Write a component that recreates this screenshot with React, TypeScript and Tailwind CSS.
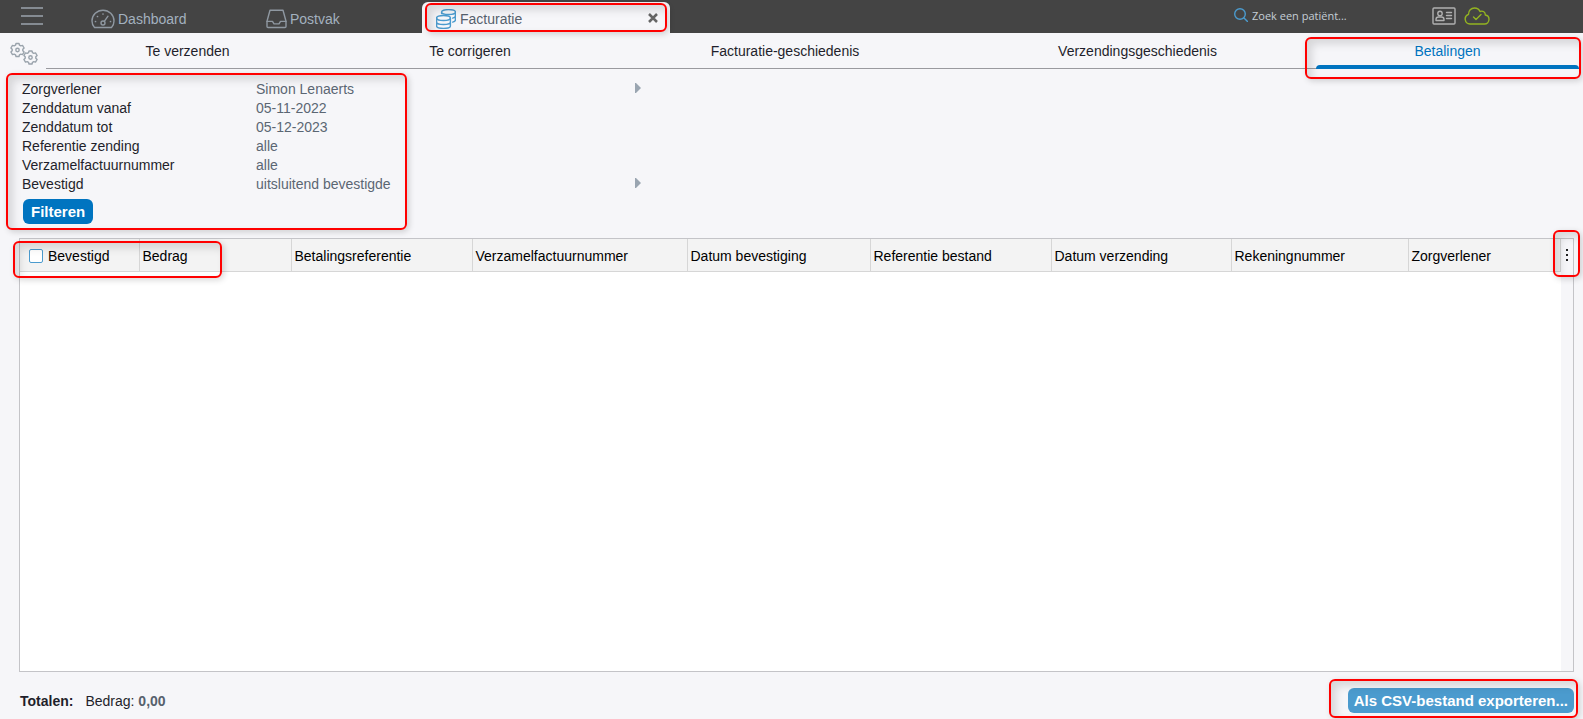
import { useState } from 'react'
import type { ReactNode } from 'react'

const filters = [
  { label: 'Zorgverlener', value: 'Simon Lenaerts', expandable: true },
  { label: 'Zenddatum vanaf', value: '05-11-2022' },
  { label: 'Zenddatum tot', value: '05-12-2023' },
  { label: 'Referentie zending', value: 'alle' },
  { label: 'Verzamelfactuurnummer', value: 'alle' },
  { label: 'Bevestigd', value: 'uitsluitend bevestigde', expandable: true },
]

const tabs = [
  'Te verzenden',
  'Te corrigeren',
  'Facturatie-geschiedenis',
  'Verzendingsgeschiedenis',
  'Betalingen',
]

const columns = [
  { title: 'Bedrag', width: 'w-[152px]' },
  { title: 'Betalingsreferentie', width: 'w-[181px]' },
  { title: 'Verzamelfactuurnummer', width: 'w-[215px]' },
  { title: 'Datum bevestiging', width: 'w-[183px]' },
  { title: 'Referentie bestand', width: 'w-[181px]' },
  { title: 'Datum verzending', width: 'w-[180px]' },
  { title: 'Rekeningnummer', width: 'w-[177px]' },
  { title: 'Zorgverlener', width: 'w-[152px]' },
]

// Red outline drawn over a part of the page, sized by the caller
function Highlight({ className }: { className: string }) {
  return (
    <span
      aria-hidden="true"
      className={`pointer-events-none absolute z-10 rounded-md border-2 border-[#ff0000] shadow-[2px_2px_6px_rgba(0,0,0,0.16),inset_5px_5px_8px_rgba(0,0,0,0.13)] ${className}`}
    />
  )
}

function Icon({
  children,
  className,
  viewBox = '0 0 24 24',
}: {
  children: ReactNode
  className: string
  viewBox?: string
}) {
  return (
    <svg
      className={className}
      viewBox={viewBox}
      fill="none"
      stroke="currentColor"
      strokeWidth="1.4"
      strokeLinecap="round"
      strokeLinejoin="round"
      aria-hidden="true"
    >
      {children}
    </svg>
  )
}

function GaugeIcon() {
  return (
    <Icon className="h-5 w-6" viewBox="0 0 24 20">
      <path d="M3.500 18.500C1.900 16.900 1 14.500 1 12 1 6 6 1.200 12 1.200S23 6 23 12c0 2.500-.9 4.900-2.500 6.500Z" />
      <circle cx="12" cy="14" r="2" />
      <path d="m13.300 12.400 3.700-5.200" />
      <path strokeWidth="1.700" d="M4.500 12.500h.01M6.500 7.500h.01M12 5h.01M19.500 12.500h.01" />
    </Icon>
  )
}

function InboxIcon() {
  return (
    <Icon className="h-5 w-[21px]" viewBox="0 0 21 20">
      <path d="M4 1.200h13l3 11v5.300c0 .6-.4 1-1 1H2c-.6 0-1-.4-1-1v-5.300Z" />
      <path d="M1 12.400h5.500l1.500 2.500h5l1.500-2.500H20" />
    </Icon>
  )
}

function CoinsIcon() {
  return (
    <Icon className="h-5 w-5" viewBox="0 0 20 20">
      <ellipse cx="7.500" cy="9" rx="6.900" ry="2.500" />
      <path d="M.6 9v8c0 1.400 3 2.400 6.900 2.400s6.900-1 6.900-2.400V9M.6 13c0 1.400 3 2.500 6.900 2.500s6.900-1.100 6.900-2.500" />
      <path d="M5.600 4.500V3c0-1.400 3-2.400 6.900-2.400s6.900 1 6.900 2.400v8c0 1-1 1.700-2.700 2.100M5.600 3c0 1.400 3 2.500 6.900 2.500s6.900-1.100 6.900-2.500M19.400 7c0 1-1 1.700-2.700 2.100" />
    </Icon>
  )
}

function Gear({ x, y }: { x: number; y: number }) {
  return (
    <g transform={`translate(${x} ${y})`}>
      <path d="M-1.500-6.500h3l.5 1.700 1.300.7 1.700-.5 1.600 2.600L5.300-.7v1.400l1.300 1.300L5 4.600l-1.700-.5-1.300.7-.5 1.700h-3L-2 4.800l-1.300-.7-1.700.5L-6.600 2l1.300-1.300V-.7L-6.600-2-5-4.600l1.700.5 1.300-.7Z" />
      <circle r="1.700" />
    </g>
  )
}

function GearsIcon() {
  return (
    <Icon className="h-6 w-7" viewBox="0 0 28 24">
      <Gear x={7.500} y={8} />
      <Gear x={20.500} y={15.500} />
    </Icon>
  )
}

function TopBar() {
  return (
    <header className="flex h-[33px] bg-[#444444] text-[#a3b1bf]">
      <button type="button" aria-label="Menu" className="w-[91px] shrink-0 pb-0.5 pl-[21px] text-[#9aa3ac]">
        <Icon className="h-5 w-[22px]" viewBox="0 0 22 20">
          <path d="M0 2h22M0 10h22M0 18h22" />
        </Icon>
      </button>
      <nav className="flex">
        <a href="#dashboard" className="flex w-[175px] items-center gap-[3px] pt-1">
          <span className="text-[#8f98a1]"><GaugeIcon /></span>
          Dashboard
        </a>
        <a href="#postvak" className="flex w-[156px] items-center gap-[3px] pt-1">
          <span className="text-[#8f98a1]"><InboxIcon /></span>
          Postvak
        </a>
        <div className="relative mt-0.5 flex w-[248px] items-center justify-between rounded-t-md bg-[#f6f6f9] pr-3 pl-3.5 text-[#56616d]">
          <a href="#facturatie" className="flex items-center gap-1 pt-0.5">
            <span className="text-[#4b9bce]"><CoinsIcon /></span>
            Facturatie
          </a>
          <button type="button" aria-label="Facturatie sluiten" className="text-[#666666]">
            <svg className="size-2.5" viewBox="0 0 10 10" stroke="currentColor" strokeWidth="2.500">
              <path d="m1 1 8 8M9 1 1 9" />
            </svg>
          </button>
          <Highlight className="inset-x-[3px] inset-y-px" />
        </div>
      </nav>
      <div className="ml-auto flex items-center pr-[93px] pb-0.5">
        <label className="flex items-center gap-1">
          <Icon className="size-3.5 text-[#4b9bce]" viewBox="0 0 14 14">
            <circle cx="6" cy="6" r="5.300" />
            <path d="m10 10 3.500 3.500" />
          </Icon>
          <input
            type="search"
            aria-label="Zoek een patiënt"
            placeholder="Zoek een patiënt..."
            className="w-[180px] bg-transparent font-['Open_Sans',sans-serif] text-[11px] outline-none placeholder:text-[#c4ced6]"
          />
        </label>
        <button type="button" aria-label="eID">
          <Icon className="h-[18px] w-6 text-[#b0b0b0]" viewBox="0 0 24 18">
            <rect x="1" y="1" width="22" height="16" rx="1" />
            <circle cx="8" cy="6.500" r="2.200" />
            <path d="M4 13.500v-1c0-1.500 1-2.500 2.500-2.500h3c1.500 0 2.500 1 2.500 2.500v1ZM14.500 5.500h5M14.500 8.500h5M14.500 11.500h5" />
          </Icon>
        </button>
        <button type="button" aria-label="Verbonden" className="ml-2">
          <Icon className="h-[18px] w-[26px] text-[#93b321]" viewBox="0 0 26 18">
            <path d="M6 17a5 5 0 0 1-1.500-9.700C4.500 3.500 7 1 10.500 1c2.700 0 4.600 1.300 5.500 3.500 3-1.200 5.500.8 5.300 3.500 2.200.3 3.700 2.200 3.700 4.300 0 2.700-2 4.700-4.500 4.700Z" />
            <path d="m9.500 10 2.500 2.500 5-5" />
          </Icon>
        </button>
      </div>
    </header>
  )
}

function TabBar() {
  const [active, setActive] = useState('Betalingen')

  return (
    <div className="flex h-9 pr-1">
      <button type="button" aria-label="Instellingen" className="w-[46px] shrink-0 pt-1.5 pl-2.5 text-[#9aa3ac]">
        <GearsIcon />
      </button>
      <div
        role="tablist"
        className="grid flex-1 grid-cols-[283fr_282fr_348fr_357fr_263fr] border-b border-[#9a9a9f]"
      >
        {tabs.map((tab) => (
          <div key={tab} className="relative -mb-px flex">
            <button
              type="button"
              role="tab"
              aria-selected={tab === active}
              onClick={() => setActive(tab)}
              className={
                tab === active
                  ? 'flex flex-1 flex-col items-center justify-between pt-2 text-[#0074c0]'
                  : 'flex flex-1 flex-col items-center pt-2'
              }
            >
              {tab}
              {tab === active && <span className="h-1 w-full rounded-t-sm bg-[#0074c0]" />}
            </button>
            {tab === 'Betalingen' && (
              <Highlight className="top-1 -right-0.5 -bottom-2.5 -left-[11px]" />
            )}
          </div>
        ))}
      </div>
    </div>
  )
}

function Filters() {
  return (
    <form className="relative mt-2.5 pb-3.5 pl-[22px]" onSubmit={(e) => e.preventDefault()}>
      <dl>
        {filters.map((filter) => (
          <div key={filter.label} className="flex h-[19px] items-center">
            <dt className="w-[234px]">{filter.label}</dt>
            <dd className="flex w-[385px] items-center justify-between text-[#5b6673]">
              {filter.value}
              {filter.expandable && (
                <button type="button" aria-label={`${filter.label} wijzigen`} className="pb-0.5">
                  <svg className="h-2.5 w-1.5" viewBox="0 0 6 10" fill="#9aa5b1">
                    <path d="M0 0h1l5 5-5 5H0Z" />
                  </svg>
                </button>
              )}
            </dd>
          </div>
        ))}
      </dl>
      <button
        type="submit"
        className="mt-1.5 ml-px h-[25px] rounded-md bg-[#0074c0] px-2 text-[15px] font-bold text-white"
      >
        Filteren
      </button>
      <Highlight className="-top-1.5 bottom-2 left-1.5 w-[401px]" />
    </form>
  )
}

function PaymentsTable() {
  return (
    <div className="relative mr-[9px] ml-[19px] flex flex-1 border border-[#c4c4c8] bg-white">
      <div className="flex-1">
        <table className="w-full table-fixed border-collapse text-left text-black">
          <thead>
            <tr className="h-8 border-b border-[#d6d6d6] bg-[#f3f3f3]">
              <th scope="col" className="w-[119px] border-r border-[#d6d6d6] pt-0.5 pl-[9px] font-normal">
                <label className="flex items-center gap-[5px]">
                  <input
                    type="checkbox"
                    className="size-3.5 appearance-none rounded-xs border border-[#4b9bce] bg-white checked:bg-[#4b9bce]"
                  />
                  Bevestigd
                </label>
              </th>
              {columns.map((column) => (
                <th
                  key={column.title}
                  scope="col"
                  className={`${column.width} border-r border-[#d6d6d6] pt-0.5 pl-[3px] font-normal whitespace-nowrap`}
                >
                  {column.title}
                </th>
              ))}
            </tr>
          </thead>
          <tbody />
        </table>
      </div>
      <div className="relative w-[13px] bg-[#f6f6f9]">
        <button type="button" aria-label="Kolommen kiezen" className="flex h-8 w-full items-center justify-center">
          <svg className="h-3 w-0.5" viewBox="0 0 2 12" fill="#222222">
            <path d="M0 0h2v2H0ZM0 5h2v2H0ZM0 10h2v2H0Z" />
          </svg>
        </button>
        <Highlight className="-top-[9px] -right-[7px] -left-2 h-[47px]" />
      </div>
      <Highlight className="top-0.5 -left-[7px] h-[37px] w-[209px]" />
    </div>
  )
}

function Footer() {
  return (
    <footer className="flex items-center justify-between pt-4 pr-[9px] pb-1.5 pl-5">
      <p className="flex gap-3">
        <strong>Totalen:</strong>
        <span>
          Bedrag: <strong className="text-[#56616d]">0,00</strong>
        </span>
      </p>
      <div className="relative">
        <button
          type="button"
          className="block h-[25px] rounded-md bg-[#4b9bce] px-1.5 text-[15px] font-bold text-white"
        >
          Als CSV-bestand exporteren...
        </button>
        <Highlight className="-top-[9px] -right-1 -bottom-[5px] -left-[19px]" />
      </div>
    </footer>
  )
}

export default function App() {
  return (
    <div className="flex min-h-screen flex-col bg-[#f6f6f9] font-['Liberation_Sans',Arial,sans-serif] text-sm text-[#1f1f2b]">
      <TopBar />
      <TabBar />
      <main className="flex flex-1 flex-col">
        <Filters />
        <PaymentsTable />
        <Footer />
      </main>
    </div>
  )
}
